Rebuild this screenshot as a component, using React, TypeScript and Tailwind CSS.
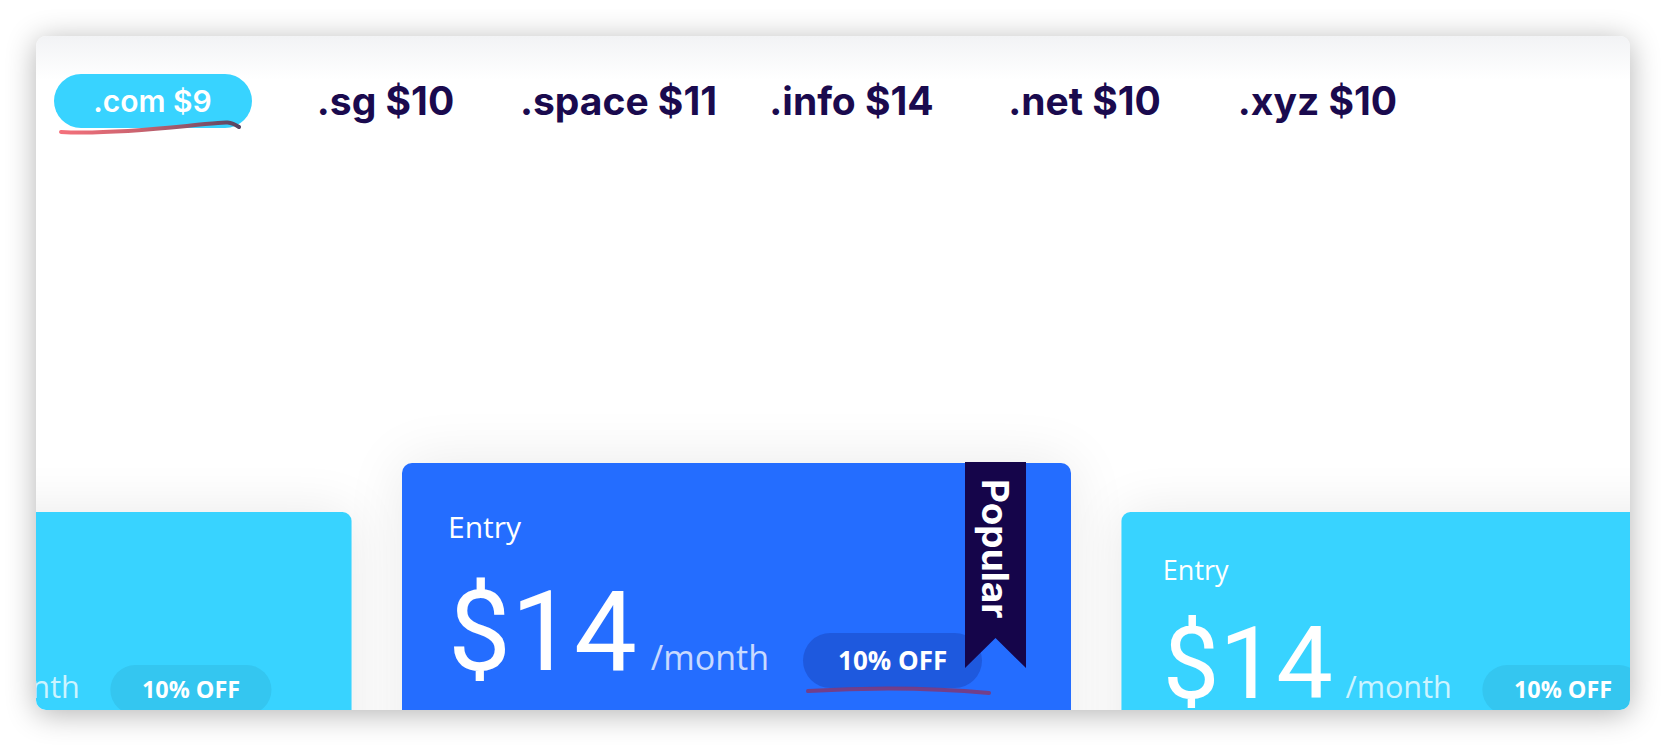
const tabs = [
  { label: ".com $9", active: true },
  { label: ".sg $10" },
  { label: ".space $11" },
  { label: ".info $14" },
  { label: ".net $10" },
  { label: ".xyz $10" },
];

type CardProps = {
  featured?: boolean;
};

const PriceCard = ({ featured }: CardProps) => {
  return (
    <div
      className={`relative h-[420px] w-[669px] shrink-0 rounded-[10px] pl-[46px] pt-[46px] text-white shadow-[0_0_60px_rgba(0,0,0,0.09)] ${
        featured ? "bg-[#246dff]" : "mt-[49px] origin-top scale-90 bg-[#38d3ff]"
      }`}
      style={{ fontFamily: "'Open Sans', sans-serif" }}
    >
      <div className="text-[30px] leading-[36px]">Entry</div>
      <div className="mt-[31px] flex items-baseline">
        <span
          className="text-[112px] leading-none"
          style={{ fontFamily: "Roboto, sans-serif" }}
        >
          $14
        </span>
        <span className="ml-[14px] text-[34px] text-white/75">/month</span>
        <span
          className={`relative ml-[34px] rounded-full px-[35px] py-[12px] text-[26px] font-bold leading-[31px] ${
            featured ? "bg-[#1e59de]" : "bg-[#34c6f0]"
          }`}
        >
          10% OFF
          {featured && (
            <svg
              className="absolute left-[2px] top-[52px]"
              width="188"
              height="12"
              viewBox="0 0 188 12"
              fill="none"
            >
              <path
                d="M3 6 C 50 3, 110 1, 184 8"
                stroke="#7b3a7e"
                strokeOpacity="0.9"
                strokeWidth="4"
                strokeLinecap="round"
              />
            </svg>
          )}
        </span>
      </div>

      {featured && (
        <div className="absolute right-[45px] top-[-1px] flex h-[206px] w-[61px] justify-center bg-[#15054a] pt-[17px] [clip-path:polygon(0_0,100%_0,100%_100%,50%_176px,0_100%)]">
          <span
            className="text-[37px] font-bold leading-[61px] text-white [writing-mode:vertical-rl]"
            style={{ fontFamily: "Inter, sans-serif" }}
          >
            Popular
          </span>
        </div>
      )}
    </div>
  );
};

export default function App() {
  return (
    <div className="h-[746px] bg-white p-[36px]">
      <div className="h-[674px] overflow-hidden rounded-[10px] bg-[linear-gradient(to_bottom,#f2f3f5,#ffffff_44px)] shadow-[0_4px_30px_rgba(0,0,0,0.3)]">
        <div
          className="flex pt-[38px]"
          style={{ fontFamily: "Inter, sans-serif" }}
        >
          {tabs.map((t) => (
            <div key={t.label} className="flex w-[233px] justify-center">
              {t.active ? (
                <div className="relative flex h-[54px] w-[198px] items-center justify-center rounded-full bg-[#38d3ff] text-[30px] font-semibold text-white">
                  {t.label}
                  <svg
                    className="absolute left-[3px] top-[44px]"
                    width="188"
                    height="18"
                    viewBox="0 0 188 18"
                    fill="none"
                  >
                    <defs>
                      <linearGradient id="scrib" x1="0" y1="0" x2="1" y2="0">
                        <stop offset="0" stopColor="#f4707b" />
                        <stop offset="0.45" stopColor="#c8636f" />
                        <stop offset="1" stopColor="#574663" />
                      </linearGradient>
                    </defs>
                    <path
                      d="M4 14 C 40 16, 90 12, 130 8 S 172 2, 182 9"
                      stroke="url(#scrib)"
                      strokeWidth="4"
                      strokeLinecap="round"
                    />
                  </svg>
                </div>
              ) : (
                <div className="h-[54px] whitespace-nowrap text-[39px] font-bold leading-[54px] text-[#1a0a4e]">
                  {t.label}
                </div>
              )}
            </div>
          ))}
        </div>

        <div className="ml-[-320px] mt-[335px] flex w-max items-start gap-[17px]">
          <PriceCard />
          <PriceCard featured />
          <PriceCard />
        </div>
      </div>
    </div>
  );
}
